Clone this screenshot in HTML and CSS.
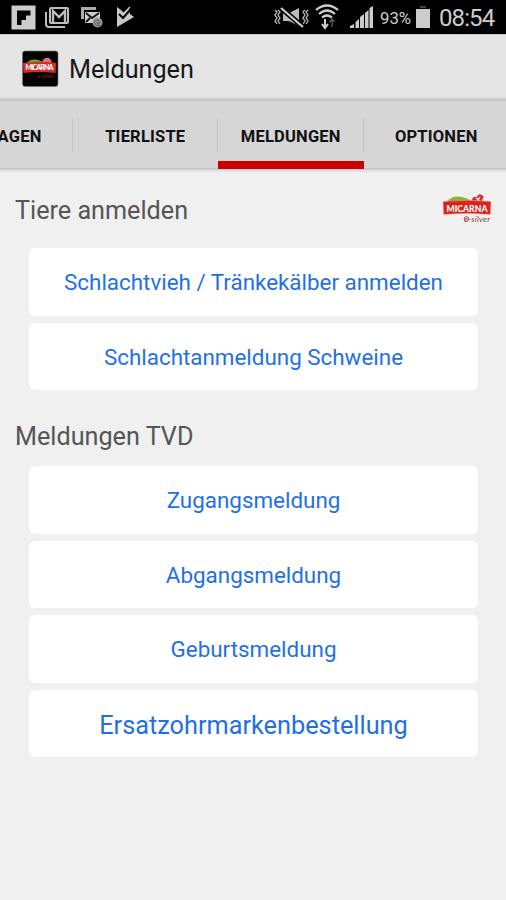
FILE: index.html
```html
<!DOCTYPE html>
<html lang="de">
<head>
<meta charset="utf-8">
<title>Meldungen</title>
<link rel="stylesheet" href="styles.css">
</head>
<body>
<div class="status">
  <svg class="status-left" width="140" height="34" viewBox="0 0 140 34">
    <path fill="#ccc" fill-rule="evenodd" d="M11.500 5.500H35.500V29.500H11.500ZM17 10.500V25H21.500V20H26V15.500H30.500V10.500Z"/>
    <g fill="none" stroke="#bdbdbd" stroke-width="2">
      <path d="M46 12V24Q46 27 49 27H65"/>
      <rect x="50" y="8" width="18" height="15" rx="1"/>
      <path d="M53 22V11L59 17L65 11V22" stroke-width="2.400"/>
    </g>
    <path d="M81 19V7H96V10H84V19Z" fill="#aaa"/>
    <rect x="85" y="12" width="15" height="11" fill="#ccc"/>
    <path d="M86 13L92 18L99 13M86 22L90 18" fill="none" stroke="#111" stroke-width="1.800"/>
    <circle cx="97.500" cy="22.500" r="5" fill="#999"/>
    <path d="M100 25Q95 27 94.500 22.500Q95 19.500 98 20Q101 21 99.500 24Q97 24.500 97 22" fill="none" stroke="#555"/>
    <path d="M117 7L121 10L124 13L129 9L130 14L134 17L117 27Z" fill="#c8c8c8"/>
    <path d="M119 14L123 18L131 9" fill="none" stroke="#050505" stroke-width="2"/>
    <path d="M123 14L130 7" stroke="#c8c8c8" stroke-width="1.500"/>
  </svg>
  <svg class="status-icons" width="105" height="34" viewBox="0 0 105 34">
    <g fill="none" stroke="#bbb" stroke-width="1.300">
      <path d="M3 10L5 12L3 15L5 18L3 21L5 24M6 10L8 12L6 15L8 18L6 21L8 24M33 10L31 12L33 15L31 18L33 21L31 24M36 10L34 12L36 15L34 18L36 21L34 24"/>
    </g>
    <path d="M11 13H17L27 8V26L17 21H11Z" fill="#bbb"/>
    <path d="M9 8L31 27" stroke="#000" stroke-width="5"/>
    <path d="M9 8L31 27" stroke="#ccc" stroke-width="2.200"/>
    <g fill="none" stroke="#d0d0d0" stroke-width="2.200">
      <path d="M44 10Q55 1 66 10M47 14Q55 7 63 14M50 17.500Q55 13.500 60 17.500"/>
      <path d="M53 19V27M50 24L53 28L56 24" stroke-width="2"/>
      <path d="M60 27V20M57.500 22L60 19L62.500 22" stroke="#555" stroke-width="1.500"/>
    </g>
    <g fill="#ccc"><path d="M78 28V26L82 24V28ZM83.500 28V22L87 19V28ZM88 28V17L92 14V28ZM93 28V13L96.500 10V28Z"/><path d="M97.500 28V8L101 6V28Z"/></g>
  </svg>
  <span class="percent">93%</span>
  <svg class="battery" width="16" height="34" viewBox="0 0 16 34"><path d="M1 9H15V28H1Z" fill="#ccc"/><path d="M5 6H11V8H5Z" fill="#444"/></svg>
  <span class="clock">08:54</span>
</div>
<header class="appbar">
  <svg width="38" height="38" viewBox="0 0 38 38">
    <rect x="1.500" y="1" width="35.500" height="35.500" rx="2.500" fill="#050303" stroke="#777" stroke-width=".7"/>
    <path d="M5 14Q10 7 20 11L24 14Z" fill="#68a832"/>
    <path d="M21 12Q23 7 28 8Q31 10 31 14H20Z" fill="#dc7480"/>
    <path d="M2 13Q19 10.500 35 13L34.500 23Q18 21 2.500 23Z" fill="#d92e24"/>
    <text x="18.500" y="20" class="logo-name" font-size="7" textLength="28">MICARNA</text>
    <text x="25" y="28" class="logo-sub" font-size="5" textLength="16" fill="#9a2018">e-silver</text>
  </svg>
  <h1>Meldungen</h1>
</header>
<nav class="tabs">
  <div class="tab tab-cut"><span>AGEN</span></div>
  <div class="tab"><span>TIERLISTE</span></div>
  <div class="tab active"><span>MELDUNGEN</span></div>
  <div class="tab"><span>OPTIONEN</span></div>
</nav>
<main>
  <div class="heading first">
    <h2>Tiere anmelden</h2>
    <svg width="50" height="32" viewBox="0 0 50 32">
      <path d="M4 10Q13 0 28 8L30 11H3Z" fill="#80b83b"/>
      <path d="M30 9Q30 4 35 5Q36 1 40 3Q43 5 40 8L41 11H29Z" fill="#d72d38"/>
      <path d="M34 6L38 9M35 9L38 5" stroke="#fff" stroke-width="1.200"/>
      <path d="M1 9.500Q25 7 49 9.500L48.500 22.500Q25 20.500 1.500 22.500Z" fill="#d9231d" stroke="#f0c4a0" stroke-width=".5"/>
      <text x="25" y="19.500" class="logo-name" font-size="10" textLength="41" lengthAdjust="spacingAndGlyphs">MICARNA</text>
      <text x="35" y="29.500" class="logo-sub" font-size="8" textLength="26" fill="#783c40">e-silver</text>
      <circle cx="24.500" cy="27" r="2.300" fill="none" stroke="#c04b50"/>
    </svg>
  </div>
  <div class="buttons">
    <button>Schlachtvieh / Tränkekälber anmelden</button>
    <button>Schlachtanmeldung Schweine</button>
  </div>
  <div class="heading second"><h2>Meldungen TVD</h2></div>
  <div class="buttons">
    <button>Zugangsmeldung</button>
    <button>Abgangsmeldung</button>
    <button>Geburtsmeldung</button>
    <button class="large">Ersatzohrmarkenbestellung</button>
  </div>
</main>
</body>
</html>
```
FILE: styles.css
```css
* { box-sizing: border-box; }
body {
  margin: 0;
  height: 900px;
  overflow: hidden;
  background: #f0f0f0;
  font-family: Roboto, sans-serif;
}
svg { display: block; flex: none; }
h1, h2 { margin: 0; font-weight: 400; white-space: nowrap; }
.status {
  height: 34px;
  display: flex;
  align-items: center;
  background: #000;
  color: #ccc;
}
.status-icons { margin-left: 132px; }
.percent { width: 37px; margin-left: 3px; font-size: 16.8px; padding-top: 2px; }
.battery { margin-left: -2px; }
.clock { margin-left: 8px; font-size: 24px; letter-spacing: -.9px; padding-top: 2px; }
.appbar {
  height: 65px;
  display: flex;
  align-items: center;
  padding: 3px 0 0 21px;
  gap: 10px;
  background: #e5e5e5;
  border-top: 1px solid #c8c8c8;
}
.appbar h1 { font-size: 25.2px; padding-top: 2px; color: #181818; }
.tabs {
  height: 69px;
  display: flex;
  margin-left: -74px;
  width: 584px;
  background: #d6d6d6;
  border-top: 2px solid #c6c6c6;
  box-shadow: 0 1px 4px rgba(0, 0, 0, .3);
}
.tab {
  width: 145.5px;
  flex: none;
  height: 68px;
  display: flex;
  align-items: center;
  justify-content: center;
  padding-top: 2px;
  font-size: 16.5px;
  letter-spacing: .2px;
  font-weight: 700;
  color: #111;
  background: linear-gradient(#c4c4c4, #c4c4c4) right 17px / 1px 34px no-repeat;
}
.tab:last-child { background: none; }
.tab-cut { width: 146.5px; justify-content: flex-end; padding-right: 31px; }
.active { border-bottom: 8px solid #c00; padding-top: 10px; }
.heading {
  display: flex;
  justify-content: space-between;
  align-items: center;
  height: 80px;
  padding: 1px 14px 0 15px;
}
.heading svg { margin-bottom: 2px; }
.first h2 { padding-top: 3px; }
.heading.second { height: 76px; padding-top: 17px; }
h2 { font-size: 25.2px; color: #555; }
.buttons { display: grid; gap: 7px; padding: 0 28px 0 29px; }
button {
  height: 67.5px;
  border: 0;
  border-radius: 6px;
  background: #fff;
  color: #1f70e8;
  font: 400 22.4px Roboto, sans-serif;
  padding: 1px 0 0;
}
button.large { font-size: 25.3px; padding-top: 4px; }
.logo-name { font-family: Lato, sans-serif; font-weight: 900; fill: #fff; text-anchor: middle; }
.logo-sub { font-family: Lato, sans-serif; font-style: italic; text-anchor: middle; }
```
